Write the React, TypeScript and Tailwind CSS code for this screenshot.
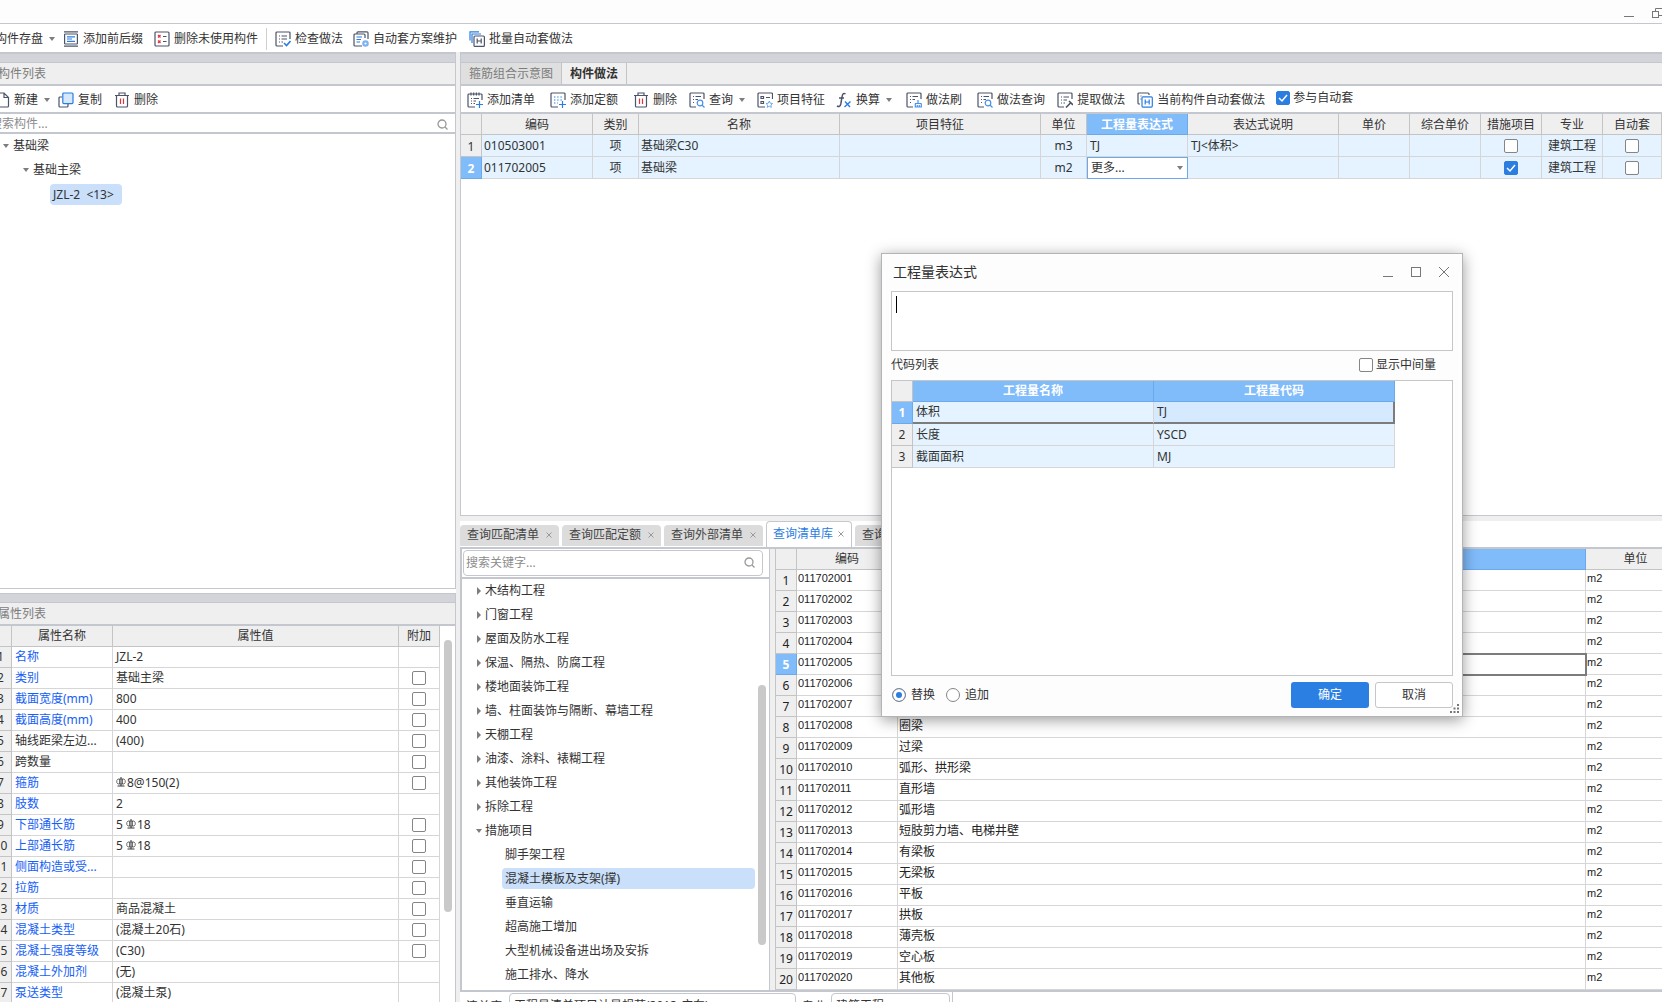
import { ReactNode } from "react";

const DARK = "#4b5468";
const BLUE = "#2b7de0";

const Svg = ({ children, size = 16 }: { children: ReactNode; size?: number }) => (
  <svg width={size} height={size} viewBox="0 0 16 16" fill="none" stroke={DARK} strokeWidth="1.2" className="shrink-0">
    {children}
  </svg>
);

const PrefixIcon = () => (
  <Svg>
    <path d="M1 .8h14M1 15.2h14M1.6 3v10M14.4 3v10" />
    <path d="M1.6 3h12.8M1.6 13h12.8" />
    <path d="M4 5.8h8M4 8h5M4 10.4h8" stroke={BLUE} />
  </Svg>
);

const UnusedIcon = () => (
  <Svg>
    <rect x="1" y="1" width="14" height="14" rx="1" />
    <path d="M9 5.5h3.500M9 10.5h3.500" />
    <path d="m4 4 2.500 2.500m0-2.500L4 6.500M4 9.500 6.500 12m0-2.500L4 12" stroke="#e0343c" />
  </Svg>
);

const CheckListIcon = () => (
  <Svg>
    <path d="M15 8V2a1 1 0 0 0-1-1H2a1 1 0 0 0-1 1v12a1 1 0 0 0 1 1h6" />
    <path d="M4 5h1M6.500 5H12M4 8h1M6.500 8H12M4 11h1M6.500 11H8" />
    <path d="m9 12 2.500 2.500L15.500 10" stroke={BLUE} strokeWidth="1.600" />
  </Svg>
);

const SchemeIcon = () => (
  <Svg>
    <path d="M12 7V4a1 1 0 0 0-1-1H2a1 1 0 0 0-1 1v10a1 1 0 0 0 1 1h7M4 3V1.800a1 1 0 0 1 1-1h9a1 1 0 0 1 1 1V8" />
    <path d="M3.500 6H9M3.500 8.500H8M3.500 11H7" stroke={BLUE} />
    <circle cx="12.500" cy="12.500" r="2.200" stroke="#7db2f2" strokeWidth="2.200" />
  </Svg>
);

const BatchIcon = () => (
  <Svg>
    <rect x="5" y="5" width="10.400" height="10.400" rx="1" />
    <path d="M8.200 7.500v5M12.200 7.500v5M8.200 10h4" />
    <path d="M3 12V3h9M1 9.500V.800h9" stroke={BLUE} />
  </Svg>
);

const NewIcon = () => (
  <Svg>
    <path d="M2 1h8l4.500 4.500V14a1 1 0 0 1-1 1H2M10 1v4.500h4.500" />
  </Svg>
);

const CopyIcon = () => (
  <Svg>
    <path d="M4 5H2a1 1 0 0 0-1 1v8a1 1 0 0 0 1 1h7a1 1 0 0 0 1-1v-2" />
    <rect x="4.800" y="1" width="10.200" height="10.600" rx="1" fill="#d5e8fc" stroke={BLUE} />
  </Svg>
);

const TrashIcon = () => (
  <Svg>
    <path d="M1 3.500h14M5 3.500V1h6v2.500M2.500 3.500V14a1 1 0 0 0 1 1h9a1 1 0 0 0 1-1V3.500" />
    <path d="M6.500 6.500v5.500M9.500 6.500v5.500" stroke="#e0343c" />
  </Svg>
);

const AddListIcon = () => (
  <Svg>
    <path d="M15 8V3a1 1 0 0 0-1-1H2a1 1 0 0 0-1 1v11a1 1 0 0 0 1 1h6M4 .500v3M6.700.500v3M9.400.500v3M12 .500v3" />
    <path d="M4 6.500h1M6.500 6.500H12M4 9h1M6.500 9H9M4 11.500h1M6.500 11.500H8" />
    <path d="M12.500 9v7M9 12.500h7" stroke={BLUE} />
  </Svg>
);

const AddQuotaIcon = () => (
  <Svg>
    <path d="M15 8V2a1 1 0 0 0-1-1H2a1 1 0 0 0-1 1v12a1 1 0 0 0 1 1h6" />
    <path d="M4 5h8M4 8h8M4 11h4" stroke={BLUE} strokeDasharray="1.400 1.800" />
    <path d="M12.500 9v7M9 12.500h7" stroke={BLUE} />
  </Svg>
);

const QueryIcon = () => (
  <Svg>
    <path d="M15 7V2a1 1 0 0 0-1-1H2a1 1 0 0 0-1 1v12a1 1 0 0 0 1 1h5" />
    <path d="M4 4.500h1M6.500 4.500H12M4 7.500h1M6.500 7.500H9M4 10.500h1" />
    <circle cx="11" cy="11" r="2.800" stroke="#4a93e8" />
    <path d="m13 13 2.500 2.500" stroke="#4a93e8" />
  </Svg>
);

const FeatureIcon = () => (
  <Svg>
    <path d="M15.500 7V2a1 1 0 0 0-1-1H2a1 1 0 0 0-1 1v12a1 1 0 0 0 1 1h6" />
    <path d="M4 4.500h2.500v2H4zM4 9.500h2.500v2H4zM9 5.500h4" />
    <path d="m12.300 9 1 2.200 2.300.300-1.700 1.600.400 2.300-2-1.200-2 1.200.400-2.300L9 11.500l2.300-.300z" stroke="#6aa9ee" strokeWidth="1" />
  </Svg>
);

const FxIcon = () => (
  <Svg>
    <path d="M9.500 2C7.500.500 6.500 2 6 5L4.800 12c-.500 2.500-2 3-3.800 2M3 6h5" strokeWidth="1.500" />
    <path d="m9 9.500 5 5.500M14.500 9.500 8.500 15" stroke={BLUE} strokeWidth="1.400" />
  </Svg>
);

const BrushIcon = () => (
  <Svg>
    <path d="M15 7V2a1 1 0 0 0-1-1H2a1 1 0 0 0-1 1v12a1 1 0 0 0 1 1h5" />
    <path d="M4 4.500h1M6.500 4.500H12M4 7.500h1M6.500 7.500H9M4 10.500h1" />
    <path d="M12 8v3M9 11.500h6.500M9.300 11.500V15h6v-3.500M11.300 13v2M13.300 13v2" stroke="#4a93e8" />
  </Svg>
);

const ExtractIcon = () => (
  <Svg>
    <path d="M15 7V2a1 1 0 0 0-1-1H2a1 1 0 0 0-1 1v12a1 1 0 0 0 1 1h5" />
    <path d="M4 5h1M6.500 5H12M4 8h1M6.500 8H10M4 11h1M6.500 11H8" />
    <path d="m9 15.500 5-5M12 9l4 4" strokeWidth="1.600" />
  </Svg>
);

const CurrentIcon = () => (
  <Svg>
    <path d="M3 12H2a1 1 0 0 1-1-1V2a1 1 0 0 1 1-1h9a1 1 0 0 1 1 1v1M3.500 4h1M3.500 7h1" />
    <rect x="5" y="4.800" width="10.300" height="10.300" rx="1" stroke={BLUE} />
    <path d="M8.200 7.500v5M12.200 7.500v5M8.200 10h4" stroke={BLUE} />
  </Svg>
);

const SearchIcon = () => (
  <svg width="11" height="11" viewBox="0 0 11 11" fill="none" stroke="#999" strokeWidth="1.300" className="shrink-0">
    <circle cx="5" cy="5" r="4" />
    <path d="m8 8 2.500 2.500" />
  </svg>
);

const Down = () => (
  <svg width="6" height="4" viewBox="0 0 6 4" className="shrink-0">
    <path d="M0 0h6L3 4z" fill="#7d7d7d" />
  </svg>
);

const Right = () => (
  <svg width="4" height="8" viewBox="0 0 4 8" className="shrink-0">
    <path d="M0 0v8l4-4z" fill="#7d7d7d" />
  </svg>
);

// HRB400 bar symbol
const Rebar = () => (
  <svg width="10" height="10" viewBox="0 0 10 10" fill="none" stroke="#333" className="mr-px mb-1 inline-block">
    <path d="M5 0v9M1.500 9h7" />
    <path d="M3.500 2v5M6.500 2v5M3.500 2H2L.800 3.500v2L2 7h6l1.200-1.500v-2L8 2z" strokeWidth=".7" />
  </svg>
);

const CheckBox = ({ label, checked, id }: { label?: string; checked?: boolean; id?: string }) => (
  <span className="inline-grid size-3.5 place-items-center align-middle">
    <input
      id={id}
      type="checkbox"
      aria-label={label}
      defaultChecked={checked}
      className="peer size-3.5 appearance-none rounded-xs border border-[#858585] bg-white [grid-area:1/1] checked:border-[#2b7de0] checked:bg-[#2b7de0]"
    />
    <svg width="10" height="10" viewBox="0 0 10 10" fill="none" stroke="#fff" strokeWidth="1.500" className="pointer-events-none invisible [grid-area:1/1] peer-checked:visible">
      <path d="m1 5 3 3 5-6" />
    </svg>
  </span>
);

type ToolProps = { icon?: ReactNode; text: string; arrow?: boolean; className?: string };

const Tool = ({ icon, text, arrow, className }: ToolProps) => (
  <button className={`flex shrink-0 items-center gap-1 whitespace-nowrap ${className ?? ""}`}>
    {icon}
    {text}
    {arrow && (
      <span className="ml-0.5">
        <Down />
      </span>
    )}
  </button>
);

const Strip = () => <div className="h-[11px] shrink-0 border-t-2 border-b border-t-[#c4c8ce] border-b-[#c4c8ce] bg-[#d3d4da]" />;

const billCols = [
  { name: "编码", w: "w-[111px]" },
  { name: "类别", w: "w-[46px]" },
  { name: "名称", w: "" },
  { name: "项目特征", w: "" },
  { name: "单位", w: "w-[46px]" },
  { name: "工程量表达式", w: "w-[101px]" },
  { name: "表达式说明", w: "w-[151px]" },
  { name: "单价", w: "w-[71px]" },
  { name: "综合单价", w: "w-[71px]" },
  { name: "措施项目", w: "w-[61px]" },
  { name: "专业", w: "w-[61px]" },
  { name: "自动套", w: "w-[59px]" },
];

const bills = [
  { code: "010503001", name: "基础梁C30", unit: "m3", exp: "TJ", desc: "TJ<体积>", measure: false },
  { code: "011702005", name: "基础梁", unit: "m2", exp: "", desc: "", measure: true },
];

const props: { name: string; value: ReactNode; black?: boolean; box?: boolean }[] = [
  { name: "名称", value: "JZL-2" },
  { name: "类别", value: "基础主梁", box: true },
  { name: "截面宽度(mm)", value: "800", box: true },
  { name: "截面高度(mm)", value: "400", box: true },
  { name: "轴线距梁左边...", value: "(400)", black: true, box: true },
  { name: "跨数量", value: "", black: true, box: true },
  { name: "箍筋", value: <><Rebar />8@150(2)</>, box: true },
  { name: "肢数", value: "2" },
  { name: "下部通长筋", value: <>5 <Rebar />18</>, box: true },
  { name: "上部通长筋", value: <>5 <Rebar />18</>, box: true },
  { name: "侧面构造或受...", value: "", box: true },
  { name: "拉筋", value: "", box: true },
  { name: "材质", value: "商品混凝土", box: true },
  { name: "混凝土类型", value: "(混凝土20石)", box: true },
  { name: "混凝土强度等级", value: "(C30)", box: true },
  { name: "混凝土外加剂", value: "(无)" },
  { name: "泵送类型", value: "(混凝土泵)" },
];

const chapters = [
  "木结构工程",
  "门窗工程",
  "屋面及防水工程",
  "保温、隔热、防腐工程",
  "楼地面装饰工程",
  "墙、柱面装饰与隔断、幕墙工程",
  "天棚工程",
  "油漆、涂料、裱糊工程",
  "其他装饰工程",
  "拆除工程",
];

const measures = ["脚手架工程", "混凝土模板及支架(撑)", "垂直运输", "超高施工增加", "大型机械设备进出场及安拆", "施工排水、降水"];

const libNames = [
  "基础", "矩形柱", "构造柱", "异形柱", "基础梁", "矩形梁", "异形梁", "圈梁", "过梁", "弧形、拱形梁",
  "直形墙", "弧形墙", "短肢剪力墙、电梯井壁", "有梁板", "无梁板", "平板", "拱板", "薄壳板", "空心板", "其他板",
];

const th = "border-r border-b border-[#c4c4c4] bg-[#efefef] p-0 text-center font-normal";
const thOn = "border-r border-b border-[#6aa9ee] bg-[#80bbfa] p-0 text-center font-bold text-white";
const td = "border-r border-b border-[#d6d6d6] py-0 px-[3px] whitespace-nowrap";
const tdLib = "border-r border-b border-[#d6d6d6] pt-0 pb-0.5 px-px whitespace-nowrap";

const ComponentPanel = () => (
  <section className="flex min-h-0 flex-[537] flex-col overflow-hidden border-r border-b border-[#c4c8ce]">
    <Strip />
    <h2 className="-ml-0.5 h-[23px] shrink-0 border-b-2 border-[#c4c8ce] bg-[#efefef] leading-[21px] text-[#7c7c7c]">构件列表</h2>
    <div className="flex h-7 shrink-0 items-center border-b-2 border-[#c4c8ce] pt-0.5">
      <Tool icon={<NewIcon />} text="新建" arrow className="-ml-1.5 pr-2" />
      <Tool icon={<CopyIcon />} text="复制" className="pr-3" />
      <Tool icon={<TrashIcon />} text="删除" />
    </div>
    <div className="-ml-2.5 flex h-5 shrink-0 items-center border-b-2 border-[#c4c8ce] pt-0.5 pr-[7px]">
      <input aria-label="搜索构件" placeholder="搜索构件..." className="min-w-0 flex-1 outline-none placeholder:text-[#8c8c8c]" />
      <SearchIcon />
    </div>
    <ul>
      <li className="flex h-6 items-center gap-1 pl-[3px]"><Down />基础梁</li>
      <li className="flex h-6 items-center gap-1 pl-[23px]"><Down />基础主梁</li>
      <li className="flex h-6 items-center pl-[50px]">
        <span className="h-[21px] rounded-sm bg-[#c9dffa] pr-2 pl-[3px] leading-[21px]">JZL-2&nbsp;&nbsp;&lt;13&gt;</span>
      </li>
    </ul>
  </section>
);

const PropertyPanel = () => (
  <section className="mt-1 flex min-h-0 flex-[409] flex-col overflow-hidden border-r border-[#c4c8ce]">
    <div className="h-2.5 shrink-0 border-y border-[#c4c8ce] bg-[#d3d4da]" />
    <h2 className="-ml-0.5 h-[23px] shrink-0 border-b-2 border-[#c4c8ce] bg-[#efefef] leading-[21px] text-[#7c7c7c]">属性列表</h2>
    <div className="flex min-h-0 flex-1 overflow-hidden">
      <div className="-ml-2.5 min-w-0 flex-1">
        <table className="w-full table-fixed border-separate border-spacing-0">
          <thead>
            <tr className="h-[21px]">
              <th className={`w-[22px] ${th}`} />
              <th className={`w-[101px] ${th}`}>属性名称</th>
              <th className={th}>属性值</th>
              <th className={`w-[41px] ${th}`}>附加</th>
            </tr>
          </thead>
          <tbody>
            {props.map((p, i) => (
              <tr key={p.name} className="h-[21px]">
                <td className={`${th} leading-4`}>{i + 1}</td>
                <td className={`${td} ${p.black ? "" : "text-[#1560f5]"}`}>{p.name}</td>
                <td className={td}>{p.value}</td>
                <td className={`${td} text-center leading-none`}>{p.box && <CheckBox label={`${p.name}附加`} />}</td>
              </tr>
            ))}
          </tbody>
        </table>
      </div>
      <div className="w-[15px] shrink-0 pt-3.5 pl-1">
        <div className="h-[272px] w-2 rounded-full bg-[#c9c9c9]" />
      </div>
    </div>
  </section>
);

const BillPanel = () => (
  <section className="flex min-h-0 flex-[463] flex-col overflow-hidden border-b border-l border-[#c4c8ce]">
    <Strip />
    <div className="flex h-[23px] shrink-0 border-b-2 border-[#c4c8ce] bg-[#efefef]">
      <button className="w-[101px] border-r border-[#c4c4c4] bg-[#dfdfdf] text-[#7c7c7c]">箍筋组合示意图</button>
      <button className="w-[65px] border-r border-[#c4c4c4] font-bold">构件做法</button>
    </div>
    <div className="flex h-7 shrink-0 items-center border-b-2 border-[#c4c8ce] pt-0.5 pl-1.5">
      <Tool icon={<AddListIcon />} text="添加清单" className="pr-[15px]" />
      <Tool icon={<AddQuotaIcon />} text="添加定额" className="pr-[15px]" />
      <Tool icon={<TrashIcon />} text="删除" className="pr-3" />
      <Tool icon={<QueryIcon />} text="查询" arrow className="pr-3" />
      <Tool icon={<FeatureIcon />} text="项目特征" className="pr-[11px]" />
      <Tool icon={<FxIcon />} text="换算" arrow className="pr-3.5" />
      <Tool icon={<BrushIcon />} text="做法刷" className="pr-[15px]" />
      <Tool icon={<QueryIcon />} text="做法查询" className="pr-3" />
      <Tool icon={<ExtractIcon />} text="提取做法" className="pr-3" />
      <Tool icon={<CurrentIcon />} text="当前构件自动套做法" className="pr-[11px]" />
      <label className="flex shrink-0 items-center gap-[3px] pb-1 whitespace-nowrap">
        <CheckBox checked />
        参与自动套
      </label>
    </div>
    <table className="w-full table-fixed border-separate border-spacing-0">
      <thead>
        <tr className="h-[21px]">
          <th className={`w-[21px] ${th}`} />
          {billCols.map((c) => (
            <th key={c.name} className={`${c.w} ${c.name === "工程量表达式" ? thOn : th}`}>
              <div className="pt-0.5">{c.name}</div>
            </th>
          ))}
        </tr>
      </thead>
      <tbody>
        {bills.map((b, i) => (
          <tr key={b.code} className="h-[22px] bg-[#e4f3ff]">
            <td className={i === 1 ? thOn : th}>
              <div className="pt-0.5">{i + 1}</div>
            </td>
            <td className={`${td} pl-0.5`}>{b.code}</td>
            <td className={`${td} text-center`}>项</td>
            <td className={`${td} pl-0.5`}>{b.name}</td>
            <td className={td} />
            <td className={`${td} text-center`}>{b.unit}</td>
            {b.exp ? (
              <td className={td}>{b.exp}</td>
            ) : (
              <td className="p-0">
                <div className="flex h-[22px] items-center border border-[#6aa9ee] bg-white pr-1">
                  <select aria-label="工程量表达式" className="min-w-0 flex-1 appearance-none pl-[3px] outline-none">
                    <option>更多...</option>
                  </select>
                  <Down />
                </div>
              </td>
            )}
            <td className={td}>{b.desc}</td>
            <td className={td} />
            <td className={td} />
            <td className={`${td} text-center leading-none`}><CheckBox label="措施项目" checked={b.measure} /></td>
            <td className={`${td} text-center`}>建筑工程</td>
            <td className={`${td} text-center leading-none`}><CheckBox label="自动套" /></td>
          </tr>
        ))}
      </tbody>
    </table>
  </section>
);

const tabs = ["查询匹配清单", "查询匹配定额", "查询外部清单", "查询清单库", "查询定额库"];

const LibraryPanel = () => (
  <section className="flex min-h-0 flex-[487] flex-col overflow-hidden">
    <div className="h-[5px] shrink-0 bg-[#efefef]" />
    <div className="flex h-7 shrink-0 items-end gap-[3px] border-b-2 border-[#c4c8ce]">
      {tabs.map((t) => (
        <button
          key={t}
          className={
            t === "查询清单库"
              ? "flex h-[26px] shrink-0 items-center gap-1 rounded-t-sm border border-b-0 border-[#c4c8ce] px-1.5 text-[#2b7de0]"
              : "mb-px flex h-[21px] shrink-0 items-center gap-1.5 rounded-t-sm bg-[#dcdcdc] pr-1.5 pl-[7px] text-[#444]"
          }
        >
          {t}
          <svg width="8" height="8" viewBox="0 0 8 8" stroke="#999">
            <path d="m1.500 1.500 5 5M6.500 1.500l-5 5" />
          </svg>
        </button>
      ))}
    </div>
    <div className="flex min-h-0 flex-1">
      <div className="flex w-[310px] shrink-0 flex-col border-r border-l-2 border-[#c4c8ce]">
        <div className="h-[30px] shrink-0 border-b-2 border-[#c4c8ce] py-px pr-1.5 pl-px">
          <div className="flex h-[26px] items-center rounded-sm border border-[#c4c8ce] pr-[7px] pl-0.5">
            <input aria-label="搜索关键字" placeholder="搜索关键字..." className="min-w-0 flex-1 outline-none placeholder:text-[#8c8c8c]" />
            <SearchIcon />
          </div>
        </div>
        <div className="flex min-h-0 flex-1 overflow-hidden">
          <ul className="min-w-0 flex-1">
            {chapters.map((c) => (
              <li key={c} className="flex h-6 items-center gap-1 pl-[15px]"><Right />{c}</li>
            ))}
            <li className="flex h-6 items-center gap-[3px] pl-3.5"><Down />措施项目</li>
            {measures.map((m, i) => (
              <li key={m} className="flex h-6 items-center pr-[3px] pl-10">
                <span className={`h-[21px] flex-1 rounded-sm pl-[3px] leading-[21px] ${i === 1 ? "bg-[#c9dffa]" : ""}`}>{m}</span>
              </li>
            ))}
          </ul>
          <div className="w-[11px] shrink-0 pt-[106px]">
            <div className="h-[260px] w-2 rounded-full bg-[#c9c9c9]" />
          </div>
        </div>
      </div>
      <div className="w-[5px] shrink-0 bg-[#efefef]" />
      <div className="min-w-0 flex-1 overflow-hidden border-l border-[#c4c4c4]">
        <table className="w-[calc(100%+24px)] table-fixed border-separate border-spacing-0">
          <thead>
            <tr className="h-[21px]">
              <th className={`w-[21px] ${th}`} />
              <th className={`w-[101px] ${th}`}>编码</th>
              <th className={thOn}>名称</th>
              <th className={`w-[100px] ${th}`}>单位</th>
            </tr>
          </thead>
          <tbody className="text-[#222]">
            {libNames.map((n, i) => (
              <tr key={n} className="h-[21px]">
                <td className={i === 4 ? thOn : th}>
                  <div className="pt-0.5">{i + 1}</div>
                </td>
                <td className={`${tdLib} font-['Liberation_Sans',sans-serif] text-[11px]`}>0117020{String(i + 1).padStart(2, "0")}</td>
                <td className={`${tdLib} ${i === 4 ? "outline-2 -outline-offset-1 outline-[#7c7c7c]" : ""}`}>{n}</td>
                <td className={`${tdLib} font-['Liberation_Sans',sans-serif] text-[11px]`}>m2</td>
              </tr>
            ))}
          </tbody>
        </table>
      </div>
    </div>
    <div className="flex h-3 shrink-0 items-start border-t-2 border-[#c4c8ce] pl-1.5">
      <label htmlFor="lib" className="w-[43px] shrink-0 leading-[29px]">清单库:</label>
      <select id="lib" className="mt-px h-[26px] w-[287px] shrink-0 appearance-none rounded-sm border border-[#c4c8ce] pl-1">
        <option>工程量清单项目计量规范(2013-广东)</option>
      </select>
      <label htmlFor="major" className="w-[35px] shrink-0 pl-1.5 leading-[29px]">专业:</label>
      <select id="major" className="mt-px h-[26px] w-[119px] shrink-0 appearance-none rounded-sm border border-[#c4c8ce] pl-1">
        <option>建筑工程</option>
      </select>
      <div className="ml-0.5 h-6 border-l border-[#c4c8ce]" />
    </div>
  </section>
);

const codes = [
  ["体积", "TJ"],
  ["长度", "YSCD"],
  ["截面面积", "MJ"],
];

const ExpressionDialog = () => (
  <div role="dialog" aria-label="工程量表达式" className="absolute top-[253px] left-[881px] w-[582px] border border-[#b4b4b4] bg-[#fdfdfd] px-[9px] pb-2 shadow-[0_3px_14px_rgba(0,0,0,0.4)]">
    <div className="flex h-[37px] items-center pr-1 pb-0.5 pl-0.5">
      <h2 className="flex-1 text-sm">工程量表达式</h2>
      <svg width="66" height="12" viewBox="0 0 66 12" fill="none" stroke="#777">
        <path d="M0 10.500h10" />
        <rect x="28.500" y="1.500" width="9" height="9" />
        <path d="m56 1 10 10M66 1 56 11" />
      </svg>
    </div>
    <div className="relative h-[60px]">
      <textarea aria-label="表达式" className="block size-full resize-none border border-[#c6c6c6] bg-white p-1 outline-none" />
      <span className="absolute top-[5px] left-[5px] h-[17px] w-px bg-black" />
    </div>
    <div className="flex h-[29px] items-center justify-between pr-[17px] pb-0.5">
      <span>代码列表</span>
      <label className="flex items-center gap-[3px]">
        <CheckBox />
        显示中间量
      </label>
    </div>
    <div className="h-[296px] border border-[#c6c6c6] bg-white pr-[57px]">
      <table className="w-full table-fixed border-separate border-spacing-0">
        <thead>
          <tr className="h-[21px]">
            <th className={`w-[21px] ${th}`} />
            <th className={thOn}>工程量名称</th>
            <th className={thOn}>工程量代码</th>
          </tr>
        </thead>
        <tbody>
          {codes.map(([name, code], i) => (
            <tr key={code} className="h-[22px] bg-[#e4f3ff]">
              <td className={i === 0 ? thOn : th}>{i + 1}</td>
              <td className={i === 0 ? "border-r border-b-2 border-r-[#d6d6d6] border-b-[#7c7c7c] px-[3px] py-0" : td}>{name}</td>
              <td className={i === 0 ? "border-r-2 border-b-2 border-[#7c7c7c] bg-[#d5e9ff] px-[3px] py-0" : td}>{code}</td>
            </tr>
          ))}
        </tbody>
      </table>
    </div>
    <div className="mt-1.5 flex h-[26px] items-center pl-px">
      {["替换", "追加"].map((t, i) => (
        <label key={t} className="mr-[11px] flex items-center gap-[5px]">
          <input
            type="radio"
            name="mode"
            defaultChecked={i === 0}
            className="size-3.5 appearance-none rounded-full border border-[#858585] bg-white checked:bg-[#2b7de0] checked:shadow-[inset_0_0_0_3px_white]"
          />
          {t}
        </label>
      ))}
      <button className="mr-1.5 ml-auto h-[26px] w-[78px] rounded-[3px] bg-[#2b7fe3] text-white">确定</button>
      <button className="h-[26px] w-[78px] rounded-[3px] border border-[#c6c6c6] bg-white">取消</button>
    </div>
    <svg width="9" height="9" viewBox="0 0 9 9" fill="#777" className="absolute right-[3px] bottom-[3px]">
      <path d="M7 0h2v2H7zM7 3.500h2v2H7zM3.500 3.500h2v2h-2zM7 7h2v2H7zM3.500 7h2v2h-2zM0 7h2v2H0z" />
    </svg>
  </div>
);

export default function App() {
  return (
    <div className="relative flex h-screen flex-col overflow-hidden bg-white font-['Noto_Sans','Noto_Sans_CJK_SC',sans-serif] text-xs text-[#333]">
      <header className="flex h-6 shrink-0 justify-end border-b border-[#c4c8ce] bg-[#fdfdfe]">
        <svg width="38" height="23" viewBox="0 0 38 23" fill="none" stroke="#777">
          <path d="M0 16.500h10" />
          <rect x="28.500" y="11.500" width="6" height="6" />
          <path d="M31.500 11.500v-3h7v7h-4" />
        </svg>
      </header>
      <div className="-ml-[5px] flex h-7 shrink-0 items-center pt-0.5">
        <Tool text="构件存盘" arrow className="pr-2" />
        <Tool icon={<PrefixIcon />} text="添加前后缀" className="pr-[11px]" />
        <Tool icon={<UnusedIcon />} text="删除未使用构件" className="pr-2" />
        <div className="mr-2 h-[22px] border-l border-[#d0d0d0]" />
        <Tool icon={<CheckListIcon />} text="检查做法" className="pr-2.5" />
        <Tool icon={<SchemeIcon />} text="自动套方案维护" className="pr-3" />
        <Tool icon={<BatchIcon />} text="批量自动套做法" />
      </div>
      <main className="flex min-h-0 flex-1">
        <div className="flex w-[456px] shrink-0 flex-col">
          <ComponentPanel />
          <PropertyPanel />
        </div>
        <div className="w-1 shrink-0 bg-[#efefef]" />
        <div className="flex min-w-0 flex-1 flex-col">
          <BillPanel />
          <LibraryPanel />
        </div>
      </main>
      <ExpressionDialog />
    </div>
  );
}
